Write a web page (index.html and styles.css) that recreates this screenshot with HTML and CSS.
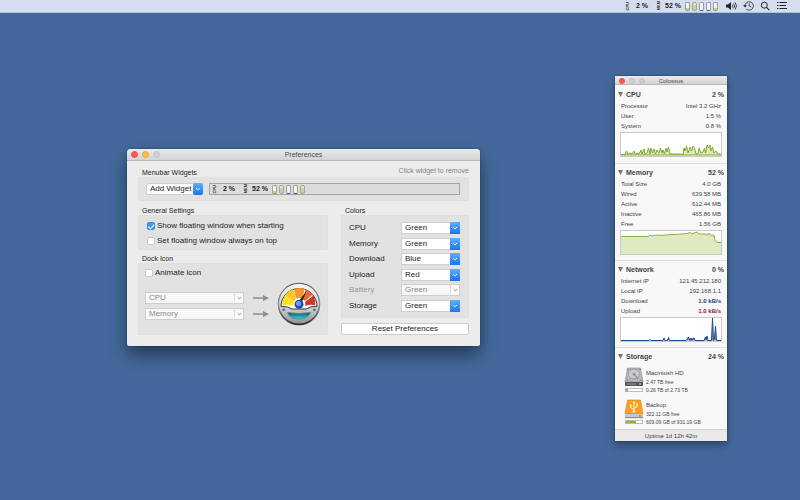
FILE: index.html
```html
<!DOCTYPE html>
<html lang="en">
<head>
    <meta charset="UTF-8">
    <meta name="viewport" content="width=device-width, initial-scale=1.0">
    <title>Colossus</title>
    <link rel="stylesheet" href="styles.css">
</head>
<body>
    <!-- Menu bar -->
    <header class="menubar">
        <div class="widget"><span class="stack">CPU</span><b class="value cpu-value">2 %</b></div>
        <div class="widget"><span class="stack">MEM</span><b class="value">52 %</b></div>
        <div class="meters">
            <span class="meter low"></span>
            <span class="meter half"></span>
            <span class="meter blue"></span>
            <span class="meter blue"></span>
            <span class="meter low"></span>
        </div>
        <div class="menu-icons">
            <svg width="11" height="10" viewBox="0 0 11 10"><path d="M0 3.4h2L5 1v8L2 6.6H0z" fill="#222"/><path d="M6.3 3.5q1.2 1.5 0 3M7.7 2.4q2 2.6 0 5.2M9.1 1.4q2.8 3.6 0 7.2" fill="none" stroke="#222" stroke-width=".8"/></svg>
            <svg width="11" height="10" viewBox="0 0 11 10"><path d="M2 5a4.2 4.2 0 1 1 1.3 3" fill="none" stroke="#222" stroke-width=".8"/><path d="M0 4.2h4L2 6.6z" fill="#222"/><path d="M6.2 2.4V5l2 1" fill="none" stroke="#222" stroke-width=".8"/></svg>
            <svg width="11" height="10" viewBox="0 0 11 10"><circle cx="4.3" cy="4.2" r="3" fill="none" stroke="#222"/><path d="M6.500 6.400l2.800 2.800" stroke="#222" stroke-width="1.2"/></svg>
            <svg width="11" height="10" viewBox="0 0 11 10"><path d="M0 1.500h1.500M0 4.500h1.500M0 7.500h1.500M2.600 1.500H10M2.600 4.500H9M2.600 7.500H10" stroke="#222" stroke-width="1.2"/></svg>
        </div>
    </header>

    <!-- Preferences window -->
    <main class="window prefs">
        <div class="titlebar">
            <div class="lights">
                <button class="light red" aria-label="Close"></button>
                <button class="light yellow" aria-label="Minimize"></button>
                <button class="light" aria-label="Zoom"></button>
            </div>
            <h1>Preferences</h1>
        </div>
        <div class="prefs-body">
            <section>
                <div class="group-head">
                    <h2>Menubar Widgets</h2>
                    <span class="hint">Click widget to remove</span>
                </div>
                <div class="group widgets">
                    <div class="dropdown add">
                        <select aria-label="Add Widget"><option>Add Widget</option></select>
                        <svg class="arrow" viewBox="0 0 10 12"><path d="M3 5l2 2 2-2"/></svg>
                    </div>
                    <div class="tray">
                        <div class="widget"><span class="stack">CPU</span><b class="value cpu-value">2 %</b></div>
                        <div class="widget"><span class="stack">MEM</span><b class="value">52 %</b></div>
                        <div class="meters">
                            <span class="meter low"></span>
                            <span class="meter half"></span>
                            <span class="meter blue"></span>
                            <span class="meter wine"></span>
                            <span class="meter half"></span>
                        </div>
                    </div>
                </div>
            </section>
            <div class="columns">
                <div class="left">
                    <section>
                        <div class="group-head"><h2>General Settings</h2></div>
                        <div class="group general">
                            <label class="check"><input type="checkbox" checked>Show floating window when starting</label>
                            <label class="check"><input type="checkbox">Set floating window always on top</label>
                        </div>
                    </section>
                    <section>
                        <div class="group-head"><h2>Dock Icon</h2></div>
                        <div class="group dock">
                            <label class="check"><input type="checkbox">Animate icon</label>
                            <div class="dock-row">
                                <div class="sources">
                                    <div class="source">
                                        <div class="dropdown">
                                            <select aria-label="Top gauge" disabled><option>CPU</option></select>
                                            <svg class="arrow" viewBox="0 0 10 12"><path d="M3 5l2 2 2-2"/></svg>
                                        </div>
                                        <svg class="pointer" width="16" height="6" viewBox="0 0 16 6"><path d="M0 2.200h10V0l6 3-6 3V3.800H0z"/></svg>
                                    </div>
                                    <div class="source">
                                        <div class="dropdown">
                                            <select aria-label="Bottom gauge" disabled><option>Memory</option></select>
                                            <svg class="arrow" viewBox="0 0 10 12"><path d="M3 5l2 2 2-2"/></svg>
                                        </div>
                                        <svg class="pointer" width="16" height="6" viewBox="0 0 16 6"><path d="M0 2.200h10V0l6 3-6 3V3.800H0z"/></svg>
                                    </div>
                                </div>
                                <svg class="gauge" width="44" height="44" viewBox="0 0 44 44">
                                    <defs>
                                        <linearGradient id="rim" x1="0" y1="0" x2="0" y2="1"><stop offset="0" stop-color="#555"/><stop offset=".5" stop-color="#8e9294"/><stop offset="1" stop-color="#272a2c"/></linearGradient>
                                        <linearGradient id="metal" x1="0" y1="0" x2="0" y2="1"><stop offset="0" stop-color="#f4f6f7"/><stop offset=".6" stop-color="#cdd2d4"/><stop offset="1" stop-color="#8d9498"/></linearGradient>
                                        <linearGradient id="teal" x1="0" y1="0" x2="0" y2="1"><stop offset="0" stop-color="#075766"/><stop offset="1" stop-color="#35d5e0"/></linearGradient>
                                    </defs>
                                    <circle cx="22" cy="22" r="21.3" fill="url(#rim)"/>
                                    <circle cx="22" cy="21.6" r="19.9" fill="url(#metal)"/>
                                    <path d="M4 24.5A18 18 0 0 1 40 24.5Q33 24 29 27H15Q11 24 4 24.5z" fill="#fff" stroke="#333" stroke-width="1"/>
                                    <path d="M5.7 23.5A16.4 16.4 0 0 1 8.5 12.5L17 19.5 15.5 24Q10 22 5.7 23.5z" fill="#ffe21d"/>
                                    <path d="M8.5 12.5A16.4 16.4 0 0 1 16 7l2.8 9.5L17 19.5z" fill="#ffc323"/>
                                    <path d="M16.8 6.8A16.4 16.4 0 0 1 28 7l-3 9.4q-3-.9-6 .1z" fill="#f79731"/>
                                    <path d="M29 7.4A16.4 16.4 0 0 1 35.8 12.6L28 19l-2.3-2z" fill="#e9662d"/>
                                    <path d="M36.3 13.4A16.4 16.4 0 0 1 38.3 23.5Q33 22 28.6 24L28 20z" fill="#c93a20"/>
                                    <path d="M20.6 21L29.6 8.4 24 22.5z" fill="#222"/>
                                    <circle cx="22" cy="22.3" r="4.5" fill="#244fa5"/><circle cx="21.5" cy="21.4" r="2.5" fill="#6ea0ee"/>
                                    <path d="M10.500 30.500q11.500 2 23 0-2 6.500-11.500 6.500t-11.500-6.500z" fill="url(#teal)" stroke="#68777b" stroke-width=".7"/>
                                    <circle cx="6.6" cy="27.8" r="1.3" fill="#576169"/><circle cx="37.4" cy="27.8" r="1.3" fill="#576169"/>
                                </svg>
                            </div>
                        </div>
                    </section>
                </div>
                <div class="right">
                    <section>
                        <div class="group-head"><h2>Colors</h2></div>
                        <div class="group colors">
                            <div class="color-row">
                                <label for="cpuColor">CPU</label>
                                <div class="dropdown"><select id="cpuColor"><option>Green</option></select><svg class="arrow" viewBox="0 0 10 12"><path d="M3 5l2 2 2-2"/></svg></div>
                            </div>
                            <div class="color-row">
                                <label for="memoryColor">Memory</label>
                                <div class="dropdown"><select id="memoryColor"><option>Green</option></select><svg class="arrow" viewBox="0 0 10 12"><path d="M3 5l2 2 2-2"/></svg></div>
                            </div>
                            <div class="color-row">
                                <label for="downloadColor">Download</label>
                                <div class="dropdown"><select id="downloadColor"><option>Blue</option></select><svg class="arrow" viewBox="0 0 10 12"><path d="M3 5l2 2 2-2"/></svg></div>
                            </div>
                            <div class="color-row">
                                <label for="uploadColor">Upload</label>
                                <div class="dropdown"><select id="uploadColor"><option>Red</option></select><svg class="arrow" viewBox="0 0 10 12"><path d="M3 5l2 2 2-2"/></svg></div>
                            </div>
                            <div class="color-row off">
                                <label for="batteryColor">Battery</label>
                                <div class="dropdown"><select id="batteryColor" disabled><option>Green</option></select><svg class="arrow" viewBox="0 0 10 12"><path d="M3 5l2 2 2-2"/></svg></div>
                            </div>
                            <div class="color-row">
                                <label for="storageColor">Storage</label>
                                <div class="dropdown"><select id="storageColor"><option>Green</option></select><svg class="arrow" viewBox="0 0 10 12"><path d="M3 5l2 2 2-2"/></svg></div>
                            </div>
                        </div>
                    </section>
                    <button class="reset" type="button">Reset Preferences</button>
                </div>
            </div>
        </div>
    </main>

    <!-- Floating stats window -->
    <aside class="window stats">
        <div class="titlebar">
            <div class="lights">
                <button class="light red" aria-label="Close"></button>
                <button class="light" aria-label="Minimize"></button>
                <button class="light" aria-label="Zoom"></button>
            </div>
            <h1>Colossus</h1>
        </div>
        <section class="panel">
            <h2><button class="toggle" aria-label="Toggle CPU"></button>CPU<span>2 %</span></h2>
            <dl>
                <div><dt>Processor</dt><dd>Intel 3.2 GHz</dd></div>
                <div><dt>User</dt><dd>1.5 %</dd></div>
                <div><dt>System</dt><dd>0.8 %</dd></div>
            </dl>
            <svg class="chart" viewBox="0 0 100 23" preserveAspectRatio="none">
                <path class="green" d="M0 22L2 21 4 22 5.500 18 7 21 9 20 11 21 13 18 14 21 16 20 18 21 20 17 21 21 23 16 24 21 26 20 27.500 15 29 21 30 15 31.500 20 33 16 34.500 21 36 17 38 20 39.500 15 41 20 42 17 43.500 21 45 15 46 19 47.500 14 49 21 54 21 60 21 62 22 63 15 64 18 65.500 13 67 20 69 14 70.500 18 72 13 73.500 15 75 21 77 21 78 15 80 20 82 19 83.500 15 84.500 20 86 12 87.500 15 89 12 90 18 91.500 14 93 20 95 18 97 21 99 21 100 22z"/>
            </svg>
        </section>
        <section class="panel">
            <h2><button class="toggle" aria-label="Toggle Memory"></button>Memory<span>52 %</span></h2>
            <dl>
                <div><dt>Total Size</dt><dd>4.0 GB</dd></div>
                <div><dt>Wired</dt><dd>639.58 MB</dd></div>
                <div><dt>Active</dt><dd>612.44 MB</dd></div>
                <div><dt>Inactive</dt><dd>465.86 MB</dd></div>
                <div><dt>Free</dt><dd>1.56 GB</dd></div>
            </dl>
            <svg class="chart" viewBox="0 0 100 23" preserveAspectRatio="none">
                <path class="fill" d="M0 23V5.500H27L29 4 31 5 35 4 40 4.500 43 4 52 3.500 60 3 66 2.500 69 1.500 71 3 73 2 76 1 78 3 85 3 87 4 88 2 90 4.500 93 4 94 9 96 11.500H100V23z"/>
                <path class="line" d="M0 5.500H27L29 4 31 5 35 4 40 4.500 43 4 52 3.500 60 3 66 2.500 69 1.500 71 3 73 2 76 1 78 3 85 3 87 4 88 2 90 4.500 93 4 94 9 96 11.500H100"/>
            </svg>
        </section>
        <section class="panel">
            <h2><button class="toggle" aria-label="Toggle Network"></button>Network<span>0 %</span></h2>
            <dl>
                <div><dt>Internet IP</dt><dd>121.45.212.180</dd></div>
                <div><dt>Local IP</dt><dd>192.168.1.1</dd></div>
                <div><dt>Download</dt><dd class="down">1.0 kB/s</dd></div>
                <div><dt>Upload</dt><dd class="up">1.0 kB/s</dd></div>
            </dl>
            <svg class="chart" viewBox="0 0 100 23" preserveAspectRatio="none">
                <path class="blue-line" d="M0 22.500H28L29 21.500 30 22.500H42L43 20 44 22.500H46.500L47.500 19.500 48.500 22.500H65L67.500 19 69 22.500 70 20 71 22.500 72 20 73.500 20.500 74 22.500H83L84.500 19 85 22 86 18 87 22.500H90.500L91.500 0 92.500 22.500 93.500 20 94.500 8 95.500 22.500H100"/>
            </svg>
        </section>
        <section class="panel">
            <h2><button class="toggle" aria-label="Toggle Storage"></button>Storage<span>24 %</span></h2>
            <div class="drives">
                <div class="drive">
                    <div class="drive-icon">
                        <svg width="20" height="20" viewBox="0 0 20 20">
                            <path d="M3.500 1h13L19 15H1z" fill="#b6b8bb" stroke="#87898c" stroke-width=".6"/>
                            <ellipse cx="10" cy="7" rx="5.600" ry="4.800" fill="#c9cbce" stroke="#929598" stroke-width=".7"/>
                            <circle cx="10" cy="7" r="1.600" fill="#999ca0"/><path d="M10 7l4 5" stroke="#77797c"/>
                            <path d="M3.500 2.500h1M15.500 2.500h1M2.500 13h1M16.500 13h1" stroke="#55585b"/>
                            <path d="M1 15h18v4H1z" fill="#55585c"/><path d="M3 17h9" stroke="#96999c"/><path d="M15 17h2" stroke="#d9dada"/>
                        </svg>
                        <progress value="10" max="100" aria-label="Macintosh HD usage"></progress>
                    </div>
                    <div class="drive-text"><h3>Macintosh HD</h3><p>2.47 TB free</p><p>0.26 TB of 2.73 TB</p></div>
                </div>
                <div class="drive">
                    <div class="drive-icon">
                        <svg width="20" height="20" viewBox="0 0 20 20">
                            <path d="M3.500 1h13L19 15H1z" fill="#f9a21b" stroke="#d88612" stroke-width=".6"/>
                            <path d="M10 3v10M10 10.500L6.800 8.800V6.500M10 9l3.200-1.500V5.500" fill="none" stroke="#fff" stroke-width=".9"/>
                            <path d="M8.700 4L10 1.800 11.300 4z" fill="#fff"/><circle cx="10" cy="12.600" r="1.200" fill="#fff"/><circle cx="6.800" cy="6.300" r=".9" fill="#fff"/><path d="M12.400 4.600H14v1.600h-1.600z" fill="#fff"/>
                            <path d="M1 15h18v4H1z" fill="#c6c7c9"/><path d="M1 18.700h18" stroke="#65686b" stroke-width=".7"/><path d="M15 17h2" stroke="#5d7d45"/>
                        </svg>
                        <progress value="65" max="100" aria-label="Backup usage"></progress>
                    </div>
                    <div class="drive-text"><h3>Backup</h3><p>322.11 GB free</p><p>609.09 GB of 931.19 GB</p></div>
                </div>
            </div>
        </section>
        <footer class="uptime">Uptime 1d 12h 42m</footer>
    </aside>
</body>
</html>
```
FILE: styles.css
```css
* {
    box-sizing: border-box;
}

body {
    margin: 0;
    min-height: 100vh;
    font-family: "Liberation Sans", Arial, sans-serif;
    font-size: 8px;
    line-height: 10px;
    color: #222;
    background-color: #43699c;
}

h1, h2, h3, p, dl, dd {
    margin: 0;
    font-weight: normal;
}

svg {
    display: block;
    flex: none;
}

button, select, input {
    margin: 0;
    padding: 0;
    border: none;
    font: inherit;
    color: inherit;
}

/* menu bar */
.menubar {
    display: flex;
    justify-content: flex-end;
    align-items: center;
    height: 13px;
    padding-right: 12px;
    background-color: #d4deee;
    border-bottom: 1px solid #b3c1d8;
}

.widget {
    display: flex;
    align-items: center;
    gap: 4px;
    margin-right: 8px;
}

.widget + .widget {
    margin-right: 4px;
}

/* sideways caption, read from bottom to top */
.stack {
    width: 5px;
    font-size: 4px;
    line-height: 5px;
    font-weight: bold;
    writing-mode: vertical-rl;
    transform: rotate(180deg);
}

.value {
    font-size: 7px;
}

.cpu-value {
    padding-left: 2px;
}

.meters {
    display: flex;
    gap: 2px;
}

.meter {
    width: 5px;
    height: 9px;
    border: 1px solid #989ea2;
    border-radius: 2px;
    background-color: #f4f6f6;
    border-bottom-color: #8aa04e;
}

.meter.half {
    background: linear-gradient(#e5ead5 30%, #c9d6a2 30%);
    border-color: #a1aa8a;
}

.meter.blue {
    border-bottom-color: #35588b;
}

.meter.wine {
    border-bottom-color: #8b2f3e;
}

.meter.low {
    background: linear-gradient(#f4f6f4 70%, #bfd091 70%);
}

.menu-icons {
    display: flex;
    gap: 6px;
    margin-left: 8px;
}

/* windows */
.window {
    position: absolute;
    background-color: #ececec;
}

.prefs {
    top: 149px;
    left: 127px;
    width: 353px;
    border-radius: 4px 4px 2px 2px;
    box-shadow: 0 9px 18px rgba(0, 0, 0, 0.45), 0 0 2px rgba(0, 0, 0, 0.4);
}

.stats {
    top: 76px;
    left: 615px;
    width: 112px;
    font-size: 6px;
    color: #444;
    background-color: #f8f8f8;
    box-shadow: 0 4px 9px rgba(0, 0, 0, 0.35), 0 0 2px rgba(0, 0, 0, 0.4);
}

.titlebar {
    display: grid;
    grid-template-columns: 1fr auto 1fr;
    align-items: center;
    height: 12px;
    padding: 0 4px;
    background: linear-gradient(#ebebeb, #d3d3d3);
    border-bottom: 1px solid #b9b9b9;
    border-radius: 4px 4px 0 0;
}

.titlebar h1 {
    font-size: 7px;
    color: #4a4a4a;
}

.lights {
    display: flex;
    gap: 4px;
}

.light {
    width: 7px;
    height: 7px;
    border-radius: 50%;
    background-color: #d0d0d0;
    border: 1px solid #c2c2c2;
}

.light.red {
    background-color: #fc5b57;
    border-color: #e5504b;
}

.light.yellow {
    background-color: #fdbe41;
    border-color: #e5a93a;
}

.stats .titlebar {
    height: 9px;
    border-radius: 0;
}

.stats .titlebar h1 {
    font-size: 6px;
}

.stats .light {
    width: 6px;
    height: 6px;
}

/* preferences */
.prefs-body {
    padding: 7px 11px 11px;
}

.group-head {
    display: flex;
    justify-content: space-between;
    height: 9px;
    padding-left: 4px;
    font-size: 7px;
}

.group-head h2 {
    font-size: 7px;
}

.hint {
    line-height: 5px;
    color: #858585;
}

.group {
    background-color: #e2e2e2;
    border: 1px solid #dfdfdf;
    border-radius: 2px;
}

.widgets {
    display: flex;
    align-items: center;
    gap: 6px;
    height: 24px;
    padding: 0 8px 0 7px;
}

.tray {
    display: flex;
    align-items: center;
    flex: 1;
    height: 12px;
    padding-left: 2px;
    border: 1px solid #a5a5a5;
    background-color: #dcdcdc;
}

.dropdown {
    display: grid;
    height: 12px;
}

.dropdown select,
.dropdown .arrow {
    grid-area: 1 / 1;
}

.dropdown select {
    appearance: none;
    width: 100%;
    height: 12px;
    padding: 0 10px 0 3px;
    line-height: 10px;
    border: 1px solid #cfcfcf;
    background-color: #fff;
    opacity: 1;
}

.arrow {
    justify-self: end;
    width: 10px;
    height: 12px;
    background: linear-gradient(#62aefa, #1a75f4);
    pointer-events: none;
}

.arrow path {
    fill: none;
    stroke: #fff;
    stroke-width: 1;
}

.dropdown select:disabled {
    color: #8a8a8a;
    background-color: #f8f8f8;
}

.dropdown select:disabled + .arrow {
    background: none;
    border-left: 1px solid #dcdcdc;
}

.dropdown select:disabled + .arrow path {
    stroke: #8a8a8a;
}

.add {
    width: 57px;
}

.add select,
.add .arrow {
    border-radius: 2px;
}

.columns {
    display: flex;
    gap: 13px;
    margin-top: 5px;
}

.left {
    flex: 1;
}

.right {
    width: 128px;
}

.check {
    display: flex;
    align-items: center;
    gap: 2px;
    height: 15px;
}

.check input {
    appearance: none;
    display: grid;
    place-items: center;
    width: 8px;
    height: 8px;
    background-color: #fff;
    border: 1px solid #c8c8c8;
    border-radius: 2px;
}

.check input:checked {
    background-color: #3f97f8;
    border-color: #2f86ee;
}

.check input:checked::before {
    content: "";
    width: 3px;
    height: 5px;
    border: solid #fff;
    border-width: 0 1px 1px 0;
    transform: rotate(40deg);
}

.general {
    height: 35px;
    padding: 2px 8px;
}

.left section + section {
    margin-top: 4px;
}

.dock {
    padding: 1px 6px 8px;
}

.dock-row {
    display: flex;
    align-items: center;
    justify-content: space-between;
    margin-top: 2px;
}

.sources {
    display: grid;
    gap: 4px;
    margin-top: 4px;
}

.source {
    display: flex;
    align-items: center;
    gap: 9px;
}

.source .dropdown {
    width: 99px;
}

.pointer {
    fill: #8d8d8d;
}

.colors {
    display: grid;
    gap: 3px;
    height: 103px;
    padding: 6px 8px 5px 7px;
}

.color-row {
    display: flex;
    align-items: center;
    justify-content: space-between;
}

.color-row .dropdown {
    width: 59px;
}

.color-row.off label {
    color: #9a9a9a;
}

.reset {
    width: 100%;
    height: 12px;
    margin-top: 5px;
    background-color: #fff;
    border: 1px solid #cdcdcd;
    border-radius: 2px;
}

/* floating window */
.panel {
    padding: 3px 5px 6px;
}

.panel + .panel {
    border-top: 1px solid #dedede;
    padding-top: 2px;
    padding-bottom: 5px;
}

.panel h2 {
    display: flex;
    align-items: center;
    height: 13px;
    margin: 0 -2px;
    font-size: 7px;
    font-weight: bold;
}

.panel h2 span {
    margin-left: auto;
}

.toggle {
    width: 5px;
    height: 5px;
    margin-right: 3px;
    background-color: #777;
    clip-path: polygon(0 0, 100% 0, 50% 100%);
}

dl div {
    display: flex;
    justify-content: space-between;
    height: 10px;
    padding: 0 1px;
}

.down {
    color: #1c3f80;
    font-weight: bold;
}

.up {
    color: #8a1f30;
    font-weight: bold;
}

.chart {
    width: 100%;
    height: 25px;
    margin-top: 1px;
    background-color: #fff;
    border: 1px solid #c9c9c9;
}

.green {
    fill: #dbe8b9;
    stroke: #84a62f;
    stroke-width: 1;
}

.fill {
    fill: #deeac2;
}

.line {
    fill: none;
    stroke: #94b04b;
}

.blue-line {
    fill: #6f8dbe;
    stroke: #244a87;
    stroke-width: 1;
}

.drives {
    display: grid;
    gap: 7px;
    padding: 4px 4px 0;
}

.drive {
    display: flex;
    gap: 2px;
    height: 25px;
}

.drive-text {
    padding-top: 1px;
    white-space: nowrap;
}

.drive-text h3 {
    font-size: 6px;
}

.drive-text p {
    font-size: 5px;
    line-height: 8px;
}

.drive-icon progress {
    appearance: none;
    display: block;
    width: 18px;
    height: 4px;
    margin: 1px;
    border: 1px solid #bbb;
    background-color: #fff;
}

.drive-icon progress::-webkit-progress-bar {
    background-color: #fff;
}

.drive-icon progress::-webkit-progress-value {
    background-color: #91b23e;
}

.uptime {
    height: 12px;
    line-height: 12px;
    text-align: center;
    background-color: #e9e9e9;
    border-top: 1px solid #d2d2d2;
}
```
